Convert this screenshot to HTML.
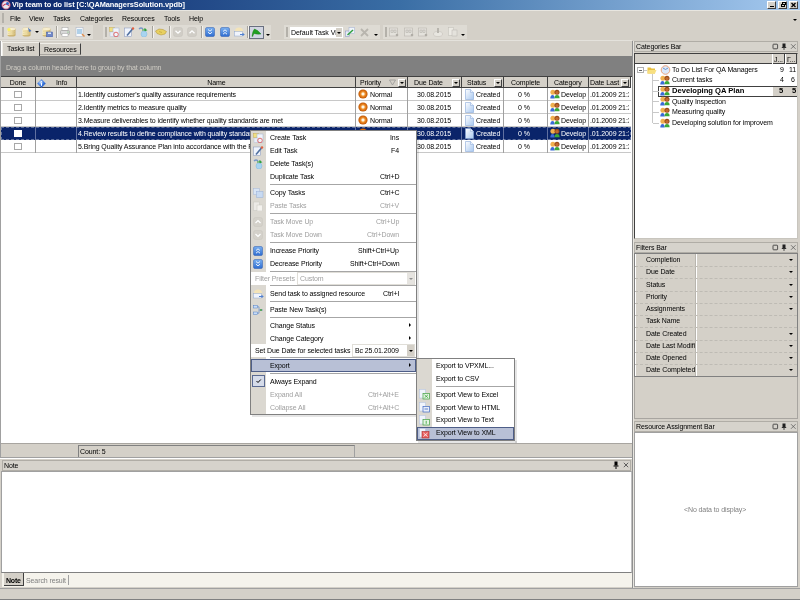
<!DOCTYPE html>
<html><head><meta charset="utf-8">
<style>
*{box-sizing:border-box}
html,body{margin:0;padding:0}
body{width:800px;height:600px;overflow:hidden;position:relative;background:#D4D0C8;font-family:"Liberation Sans",sans-serif;font-size:7px;color:#000;letter-spacing:-0.1px}
.a{position:absolute}
.t{position:absolute;white-space:nowrap;line-height:1;will-change:transform}
</style></head><body>
<div class="a" style="left:0px;top:0px;width:800px;height:10px;background:linear-gradient(to right,#0A246A 0%,#3A6EA5 50%,#A6CAF0 100%)"></div>
<svg class="a" style="left:1px;top:0px" width="10" height="10" viewBox="0 0 10 10"><circle cx="5" cy="5" r="4.2" fill="#E8E8F0" stroke="#B03050" stroke-width="0.8"/><path d="M2 6 Q5 2 8 6" stroke="#D04060" stroke-width="1.2" fill="none"/><circle cx="6.5" cy="3.5" r="1.5" fill="#3060C0"/></svg>
<div class="t" style="left:12px;top:1px;font-weight:bold;color:#fff;font-size:7.4px;letter-spacing:-0.05px">Vip team to do list [C:\QAManagersSolution.vpdb]</div>
<div class="a" style="left:767px;top:1px;width:9px;height:8px;background:#D4D0C8;border:1px solid;border-color:#fff #404040 #404040 #fff"></div>
<div class="a" style="left:778px;top:1px;width:9px;height:8px;background:#D4D0C8;border:1px solid;border-color:#fff #404040 #404040 #fff"></div>
<div class="a" style="left:789px;top:1px;width:9px;height:8px;background:#D4D0C8;border:1px solid;border-color:#fff #404040 #404040 #fff"></div>
<div class="a" style="left:770px;top:6px;width:4px;height:1px;background:#000"></div>
<div class="a" style="left:781px;top:4px;width:4px;height:3px;border:1px solid #000;border-top-width:1.5px"></div>
<div class="a" style="left:782px;top:2px;width:4px;height:3px;border:1px solid #000;border-top-width:1.5px"></div>
<svg class="a" style="left:790px;top:2px" width="7" height="6" viewBox="0 0 7 6"><path d="M1.5 1 L5.5 5 M5.5 1 L1.5 5" stroke="#000" stroke-width="1.3"/></svg>
<div class="a" style="left:0px;top:10px;width:800px;height:1px;background:#E8E6E0"></div>
<div class="a" style="left:2px;top:13px;width:2px;height:10px;background:#B4B1AA"></div>
<div class="t" style="left:10px;top:15px;">File</div>
<div class="t" style="left:29px;top:15px;">View</div>
<div class="t" style="left:53px;top:15px;">Tasks</div>
<div class="t" style="left:80px;top:15px;">Categories</div>
<div class="t" style="left:122px;top:15px;">Resources</div>
<div class="t" style="left:164px;top:15px;">Tools</div>
<div class="t" style="left:189px;top:15px;">Help</div>
<div class="a" style="left:793px;top:19px;width:0;height:0;border-left:2px solid transparent;border-right:2px solid transparent;border-top:2px solid #000"></div>
<div class="a" style="left:0px;top:25px;width:93px;height:14px;background:#DEDBD4"></div>
<div class="a" style="left:103px;top:25px;width:168px;height:14px;background:#DEDBD4"></div>
<div class="a" style="left:284px;top:25px;width:96px;height:14px;background:#DEDBD4"></div>
<div class="a" style="left:383px;top:25px;width:84px;height:14px;background:#DEDBD4"></div>
<div class="a" style="left:2px;top:27px;width:2px;height:10px;background:#B4B1AA"></div>
<div class="a" style="left:105px;top:27px;width:2px;height:10px;background:#B4B1AA"></div>
<div class="a" style="left:286px;top:27px;width:2px;height:10px;background:#B4B1AA"></div>
<div class="a" style="left:385px;top:27px;width:2px;height:10px;background:#B4B1AA"></div>
<svg class="a" style="left:7px;top:27px" width="10" height="10" viewBox="0 0 10 10"><defs><linearGradient id="g1" x1="0" x2="1"><stop offset="0" stop-color="#F8EDC0"/><stop offset="0.5" stop-color="#EFDDA0"/><stop offset="1" stop-color="#C8AE68"/></linearGradient></defs><ellipse cx="4.5" cy="8.2" rx="4" ry="1.3" fill="#C8AE68"/><rect x="0.5" y="2" width="8" height="6.2" fill="url(#g1)"/><ellipse cx="4.5" cy="2" rx="4" ry="1.3" fill="#FBF4D8" stroke="#D8C080" stroke-width="0.4"/><path d="M1 4.5 Q4.5 5.8 8 4.5 M1 6.5 Q4.5 7.8 8 6.5" stroke="#D8C890" stroke-width="0.5" fill="none"/><circle cx="2" cy="2.5" r="1.6" fill="#F8F060"/></svg>
<svg class="a" style="left:22px;top:27px" width="10" height="10" viewBox="0 0 10 10"><defs><linearGradient id="g2" x1="0" x2="1"><stop offset="0" stop-color="#F8EDC0"/><stop offset="0.5" stop-color="#EFDDA0"/><stop offset="1" stop-color="#C8AE68"/></linearGradient></defs><ellipse cx="4.5" cy="8.2" rx="4" ry="1.3" fill="#C8AE68"/><rect x="0.5" y="2" width="8" height="6.2" fill="url(#g2)"/><ellipse cx="4.5" cy="2" rx="4" ry="1.3" fill="#FBF4D8" stroke="#D8C080" stroke-width="0.4"/><path d="M1 4.5 Q4.5 5.8 8 4.5 M1 6.5 Q4.5 7.8 8 6.5" stroke="#D8C890" stroke-width="0.5" fill="none"/><path d="M6 0.5 L9.5 4 L7 5 Z" fill="#5078C0"/></svg>
<div class="a" style="left:35px;top:31px;width:0;height:0;border-left:2px solid transparent;border-right:2px solid transparent;border-top:2px solid #000"></div>
<svg class="a" style="left:42px;top:27px" width="11" height="10" viewBox="0 0 11 10"><defs><linearGradient id="g3" x1="0" x2="1"><stop offset="0" stop-color="#F8EDC0"/><stop offset="0.5" stop-color="#EFDDA0"/><stop offset="1" stop-color="#C8AE68"/></linearGradient></defs><ellipse cx="4.5" cy="8.2" rx="4" ry="1.3" fill="#C8AE68"/><rect x="0.5" y="2" width="8" height="6.2" fill="url(#g3)"/><ellipse cx="4.5" cy="2" rx="4" ry="1.3" fill="#FBF4D8" stroke="#D8C080" stroke-width="0.4"/><path d="M1 4.5 Q4.5 5.8 8 4.5 M1 6.5 Q4.5 7.8 8 6.5" stroke="#D8C890" stroke-width="0.5" fill="none"/><rect x="4.5" y="5" width="6" height="5" fill="#7088C8" stroke="#4058A0" stroke-width="0.5"/><rect x="6" y="5.5" width="3" height="1.5" fill="#E0E8F8"/></svg>
<div class="a" style="left:56px;top:26px;width:1px;height:12px;background:#A6A39C"></div>
<div class="a" style="left:57px;top:26px;width:1px;height:12px;background:#F4F2EE"></div>
<svg class="a" style="left:60px;top:27px" width="10" height="10" viewBox="0 0 10 10"><rect x="2" y="0.5" width="6" height="3" fill="#fff" stroke="#A0A0A0" stroke-width="0.5"/><rect x="0.5" y="3.5" width="9" height="4" rx="1" fill="#D8D8D8" stroke="#909090" stroke-width="0.5"/><rect x="2" y="6.5" width="6" height="3" fill="#fff" stroke="#A0A0A0" stroke-width="0.5"/><circle cx="8" cy="5" r="0.5" fill="#40B040"/></svg>
<svg class="a" style="left:75px;top:27px" width="10" height="10" viewBox="0 0 10 10"><rect x="1" y="0.5" width="7" height="9" fill="#F4F8FC" stroke="#A8B0C0" stroke-width="0.5"/><rect x="2" y="2" width="5" height="5" fill="#B0D0E8"/><path d="M7 7 L9.5 9.5" stroke="#E09050" stroke-width="1.5"/></svg>
<div class="a" style="left:87px;top:34px;width:0;height:0;border-left:2px solid transparent;border-right:2px solid transparent;border-top:2px solid #000"></div>
<svg class="a" style="left:109px;top:27px" width="11" height="10" viewBox="0 0 11 10"><rect x="0.5" y="0.5" width="5" height="4" fill="#F0E080" stroke="#C0A040" stroke-width="0.4"/><rect x="4" y="1" width="6" height="8.5" fill="#F0F4FA" stroke="#A0B0D0" stroke-width="0.5"/><rect x="1" y="5" width="4" height="4.5" fill="#E8EEF8" stroke="#B0B8D0" stroke-width="0.4"/><circle cx="7" cy="7.5" r="2.3" fill="none" stroke="#E06060" stroke-width="0.9"/></svg>
<svg class="a" style="left:124px;top:27px" width="11" height="10" viewBox="0 0 11 10"><rect x="0.5" y="1" width="7" height="8.5" fill="#F0F4FC" stroke="#8090B8" stroke-width="0.5"/><path d="M3 8.5 L8.5 2" stroke="#5070A0" stroke-width="1.6"/><circle cx="9" cy="1.5" r="1.2" fill="#E06040"/></svg>
<svg class="a" style="left:138px;top:27px" width="11" height="10" viewBox="0 0 11 10"><path d="M1 2 Q3 0 5 2" stroke="#7898C8" stroke-width="1.3" fill="none"/><path d="M4 3 L8 3 L6.5 1.5 M8 3 L6.5 4.5" stroke="#30A040" stroke-width="1.2" fill="none"/><circle cx="6" cy="7" r="3" fill="#A8D4F0" stroke="#80B8E0" stroke-width="0.5"/></svg>
<div class="a" style="left:152px;top:26px;width:1px;height:12px;background:#A6A39C"></div>
<div class="a" style="left:153px;top:26px;width:1px;height:12px;background:#F4F2EE"></div>
<svg class="a" style="left:155px;top:28px" width="12" height="8" viewBox="0 0 12 8"><path d="M0.5 3 L4 1 L8 1.5 L11.5 3.5 L10 6 L6 7 L2 5.5 Z" fill="#E8D060" stroke="#B09030" stroke-width="0.5"/><path d="M4 3.5 L7 4.5" stroke="#B09030" stroke-width="0.5"/></svg>
<div class="a" style="left:169px;top:26px;width:1px;height:12px;background:#A6A39C"></div>
<div class="a" style="left:170px;top:26px;width:1px;height:12px;background:#F4F2EE"></div>
<svg class="a" style="left:173px;top:27px" width="10" height="10" viewBox="0 0 10 10"><rect x="0.5" y="0.5" width="9" height="9" rx="2" fill="#D0CDC6" stroke="#C4C1BA" stroke-width="0.5"/><path d="M2.5 3.8 L5 6.2 L7.5 3.8" stroke="#fff" stroke-width="1.3" fill="none"/></svg>
<svg class="a" style="left:187px;top:27px" width="10" height="10" viewBox="0 0 10 10"><rect x="0.5" y="0.5" width="9" height="9" rx="2" fill="#D0CDC6" stroke="#C4C1BA" stroke-width="0.5"/><path d="M2.5 6.2 L5 3.8 L7.5 6.2" stroke="#fff" stroke-width="1.3" fill="none"/></svg>
<div class="a" style="left:201px;top:26px;width:1px;height:12px;background:#A6A39C"></div>
<div class="a" style="left:202px;top:26px;width:1px;height:12px;background:#F4F2EE"></div>
<svg class="a" style="left:205px;top:27px" width="10" height="10" viewBox="0 0 10 10"><defs><linearGradient id="bb1" x1="0" y1="0" x2="0" y2="1"><stop offset="0" stop-color="#7AB0F0"/><stop offset="1" stop-color="#2E6CD0"/></linearGradient></defs><rect x="0.5" y="0.5" width="9" height="9" rx="1.5" fill="url(#bb1)" stroke="#2A5AB0" stroke-width="0.5"/><path d="M3 2.5 L5 4.2 L7 2.5 M3 5.2 L5 6.9 L7 5.2" stroke="#fff" stroke-width="0.9" fill="none"/></svg>
<svg class="a" style="left:220px;top:27px" width="10" height="10" viewBox="0 0 10 10"><defs><linearGradient id="bb2" x1="0" y1="0" x2="0" y2="1"><stop offset="0" stop-color="#7AB0F0"/><stop offset="1" stop-color="#2E6CD0"/></linearGradient></defs><rect x="0.5" y="0.5" width="9" height="9" rx="1.5" fill="url(#bb2)" stroke="#2A5AB0" stroke-width="0.5"/><path d="M3 4.5 L5 2.8 L7 4.5 M3 7.2 L5 5.5 L7 7.2" stroke="#fff" stroke-width="0.9" fill="none"/></svg>
<svg class="a" style="left:234px;top:27px" width="11" height="10" viewBox="0 0 11 10"><ellipse cx="5" cy="4" rx="4" ry="3.5" fill="#F4E4B8"/><rect x="0.5" y="4.5" width="8" height="4.5" fill="#F0F4FC" stroke="#90A8D0" stroke-width="0.5"/><path d="M6 7.5 L10 7.5 L8.5 6 M10 7.5 L8.5 9" stroke="#5080D0" stroke-width="1" fill="none"/></svg>
<div class="a" style="left:247px;top:26px;width:1px;height:12px;background:#A6A39C"></div>
<div class="a" style="left:248px;top:26px;width:1px;height:12px;background:#F4F2EE"></div>
<div class="a" style="left:249px;top:26px;width:15px;height:13px;background:#D2D6E2;border:1px solid #6A7080"></div>
<svg class="a" style="left:251px;top:28px" width="11" height="9" viewBox="0 0 11 9"><path d="M1 8.5 Q1.5 3 3.5 1 Q7 2 10 6 Q6 6.5 3 5.5 Q2 7 1.8 8.5" fill="#20A020" stroke="#107010" stroke-width="0.4"/></svg>
<div class="a" style="left:266px;top:34px;width:0;height:0;border-left:2px solid transparent;border-right:2px solid transparent;border-top:2px solid #000"></div>
<div class="a" style="left:290px;top:27px;width:53px;height:11px;background:#fff"></div>
<div class="a" style="left:290px;top:27px;width:46px;height:11px;overflow:hidden"><div class="t" style="left:1px;top:2px;letter-spacing:-0.05px">Default Task View</div></div>
<div class="a" style="left:336px;top:28px;width:6px;height:9px;background:#D4D0C8"></div>
<div class="a" style="left:337px;top:32px;width:0;height:0;border-left:2px solid transparent;border-right:2px solid transparent;border-top:2px solid #000"></div>
<svg class="a" style="left:345px;top:27px" width="11" height="10" viewBox="0 0 11 10"><rect x="0.5" y="4" width="4" height="5.5" fill="#E8ECF8" stroke="#8090C0" stroke-width="0.5"/><rect x="4" y="0.5" width="5.5" height="6" fill="#F0F4FC" stroke="#A0B0D0" stroke-width="0.5"/><path d="M2.5 8 L8 3" stroke="#30A040" stroke-width="1.5"/></svg>
<svg class="a" style="left:360px;top:28px" width="9" height="9" viewBox="0 0 9 9"><path d="M1 1 L8 8 M8 1 L1 8" stroke="#B8B5AE" stroke-width="1.8"/></svg>
<div class="a" style="left:374px;top:34px;width:0;height:0;border-left:2px solid transparent;border-right:2px solid transparent;border-top:2px solid #000"></div>
<svg class="a" style="left:389px;top:27px" width="10" height="10" viewBox="0 0 10 10"><rect x="0.5" y="1" width="8" height="8" fill="#E4E2DC" stroke="#B8B5AE" stroke-width="0.6"/><rect x="2" y="3" width="2" height="2.5" fill="none" stroke="#A8A59E" stroke-width="0.5"/><rect x="5" y="3" width="2" height="2.5" fill="none" stroke="#A8A59E" stroke-width="0.5"/><circle cx="8" cy="8" r="1.3" fill="#B0ADA6"/></svg>
<svg class="a" style="left:404px;top:27px" width="10" height="10" viewBox="0 0 10 10"><rect x="0.5" y="1" width="8" height="8" fill="#E4E2DC" stroke="#B8B5AE" stroke-width="0.6"/><rect x="2" y="3" width="2" height="2.5" fill="none" stroke="#A8A59E" stroke-width="0.5"/><rect x="5" y="3" width="2" height="2.5" fill="none" stroke="#A8A59E" stroke-width="0.5"/><circle cx="8" cy="8" r="1.3" fill="#B0ADA6"/></svg>
<svg class="a" style="left:418px;top:27px" width="10" height="10" viewBox="0 0 10 10"><rect x="0.5" y="1" width="8" height="8" fill="#E4E2DC" stroke="#B8B5AE" stroke-width="0.6"/><rect x="2" y="3" width="2" height="2.5" fill="none" stroke="#A8A59E" stroke-width="0.5"/><rect x="5" y="3" width="2" height="2.5" fill="none" stroke="#A8A59E" stroke-width="0.5"/><circle cx="8" cy="8" r="1.3" fill="#B0ADA6"/></svg>
<svg class="a" style="left:433px;top:27px" width="10" height="10" viewBox="0 0 10 10"><ellipse cx="5" cy="7" rx="4.5" ry="2.5" fill="#E8E6E0" stroke="#C0BDB6" stroke-width="0.5"/><rect x="4" y="1" width="2" height="5" fill="#B8B5AE"/></svg>
<svg class="a" style="left:448px;top:27px" width="10" height="10" viewBox="0 0 10 10"><rect x="0.5" y="0.5" width="5" height="8" fill="#ECEAE4" stroke="#C0BDB6" stroke-width="0.5"/><rect x="4" y="3" width="5" height="6" fill="#E4E2DC" stroke="#B8B5AE" stroke-width="0.5"/></svg>
<div class="a" style="left:461px;top:34px;width:0;height:0;border-left:2px solid transparent;border-right:2px solid transparent;border-top:2px solid #000"></div>
<div class="a" style="left:0px;top:40px;width:632px;height:1px;background:#E4E2DC"></div>
<div class="a" style="left:1px;top:41px;width:1px;height:15px;background:#fff"></div>
<div class="a" style="left:2px;top:42px;width:38px;height:14px;background:#D4D0C8;border-top:1px solid #F0EEE8;border-left:1px solid #F0EEE8;border-right:1px solid #404040"></div>
<div class="t" style="left:7px;top:45px;">Tasks list</div>
<div class="a" style="left:40px;top:43px;width:41px;height:12px;border-top:1px solid #F0EEE8;border-right:1px solid #404040;border-bottom:1px solid #A8A5A0"></div>
<div class="t" style="left:44px;top:46px;">Resources</div>
<div class="a" style="left:1px;top:56px;width:631px;height:21px;background:#808080"></div>
<div class="t" style="left:6px;top:64px;color:#CFCCC4">Drag a column header here to group by that column</div>
<div class="a" style="left:1px;top:77px;width:631px;height:366px;background:#fff"></div>
<div class="a" style="left:1px;top:76px;width:631px;height:1px;background:#404040"></div>
<div class="a" style="left:1px;top:77px;width:630px;height:11px;background:#D4D0C8;border-bottom:1px solid #404040"></div>
<div class="a" style="left:1px;top:77px;width:35px;height:10px;border-right:1px solid #404040"></div>
<div class="a" style="left:36px;top:77px;width:41px;height:10px;border-right:1px solid #404040"></div>
<div class="a" style="left:77px;top:77px;width:279px;height:10px;border-right:1px solid #404040"></div>
<div class="a" style="left:356px;top:77px;width:52px;height:10px;border-right:1px solid #404040"></div>
<div class="a" style="left:408px;top:77px;width:54px;height:10px;border-right:1px solid #404040"></div>
<div class="a" style="left:462px;top:77px;width:42px;height:10px;border-right:1px solid #404040"></div>
<div class="a" style="left:504px;top:77px;width:44px;height:10px;border-right:1px solid #404040"></div>
<div class="a" style="left:548px;top:77px;width:41px;height:10px;border-right:1px solid #404040"></div>
<div class="a" style="left:589px;top:77px;width:42px;height:10px;border-right:1px solid #404040"></div>
<div class="t" style="left:1px;top:79px;width:34px;text-align:center">Done</div>
<div class="t" style="left:56px;top:79px;">Info</div>
<div class="t" style="left:77px;top:79px;width:279px;text-align:center">Name</div>
<div class="t" style="left:360px;top:79px;">Priority</div>
<div class="t" style="left:414px;top:79px;">Due Date</div>
<div class="t" style="left:467px;top:79px;">Status</div>
<div class="t" style="left:511px;top:79px;">Complete</div>
<div class="t" style="left:554px;top:79px;">Category</div>
<div class="t" style="left:590px;top:79px;">Date Last</div>
<div class="a" style="left:398px;top:79px;width:8px;height:8px;background:#D4D0C8;border:1px solid #404040;border-top-color:#fff;border-left-color:#fff"></div>
<div class="a" style="left:400px;top:82px;width:0;height:0;border-left:2px solid transparent;border-right:2px solid transparent;border-top:2px solid #000"></div>
<div class="a" style="left:452px;top:79px;width:8px;height:8px;background:#D4D0C8;border:1px solid #404040;border-top-color:#fff;border-left-color:#fff"></div>
<div class="a" style="left:454px;top:82px;width:0;height:0;border-left:2px solid transparent;border-right:2px solid transparent;border-top:2px solid #000"></div>
<div class="a" style="left:494px;top:79px;width:8px;height:8px;background:#D4D0C8;border:1px solid #404040;border-top-color:#fff;border-left-color:#fff"></div>
<div class="a" style="left:496px;top:82px;width:0;height:0;border-left:2px solid transparent;border-right:2px solid transparent;border-top:2px solid #000"></div>
<div class="a" style="left:621px;top:79px;width:8px;height:8px;background:#D4D0C8;border:1px solid #404040;border-top-color:#fff;border-left-color:#fff"></div>
<div class="a" style="left:623px;top:82px;width:0;height:0;border-left:2px solid transparent;border-right:2px solid transparent;border-top:2px solid #000"></div>
<svg class="a" style="left:389px;top:79px" width="7" height="7" viewBox="0 0 7 7"><path d="M0.5 1 L6.5 1 L3.5 6 Z" fill="none" stroke="#909090" stroke-width="0.7"/></svg>
<svg class="a" style="left:37px;top:79px" width="9" height="9" viewBox="0 0 9 9"><defs><radialGradient id="ig" cx="0.4" cy="0.35" r="0.7"><stop offset="0" stop-color="#C8E0FF"/><stop offset="0.5" stop-color="#3A78E0"/><stop offset="1" stop-color="#1A48A8"/></radialGradient></defs><path d="M4.5 0.3 L8.7 4.5 L4.5 8.7 L0.3 4.5 Z" fill="url(#ig)" stroke="#6A98D8" stroke-width="0.4"/><rect x="4" y="2.2" width="1" height="1" fill="#fff"/><rect x="4" y="3.8" width="1" height="3" fill="#fff"/></svg>
<div class="a" style="left:1px;top:88px;width:630px;height:13px;background:#fff"></div>
<div class="a" style="left:1px;top:100px;width:630px;height:1px;background:#C8C8C8"></div>
<div class="a" style="left:35px;top:88px;width:1px;height:13px;background:#A0A0A0"></div>
<div class="a" style="left:76px;top:88px;width:1px;height:13px;background:#A0A0A0"></div>
<div class="a" style="left:355px;top:88px;width:1px;height:13px;background:#A0A0A0"></div>
<div class="a" style="left:407px;top:88px;width:1px;height:13px;background:#A0A0A0"></div>
<div class="a" style="left:461px;top:88px;width:1px;height:13px;background:#A0A0A0"></div>
<div class="a" style="left:503px;top:88px;width:1px;height:13px;background:#A0A0A0"></div>
<div class="a" style="left:547px;top:88px;width:1px;height:13px;background:#A0A0A0"></div>
<div class="a" style="left:588px;top:88px;width:1px;height:13px;background:#A0A0A0"></div>
<div class="a" style="left:14px;top:91px;width:8px;height:7px;background:#fff;border:1px solid #A8A8A8"></div>
<div class="t" style="left:78px;top:91px;color:#000">1.Identify customer&#39;s quality assurance requirements</div>
<svg class="a" style="left:358px;top:89px" width="10" height="10" viewBox="0 0 10 10"><defs><radialGradient id="pg0" cx="0.5" cy="0.5" r="0.5"><stop offset="0" stop-color="#FFFFFF"/><stop offset="0.25" stop-color="#FFF0D8"/><stop offset="0.42" stop-color="#F0A040"/><stop offset="0.7" stop-color="#E07010"/><stop offset="1" stop-color="#B85808"/></radialGradient></defs><circle cx="5" cy="5" r="4.6" fill="url(#pg0)"/></svg>
<div class="t" style="left:370px;top:91px;color:#000">Normal</div>
<div class="t" style="left:417px;top:91px;color:#000">30.08.2015</div>
<svg class="a" style="left:465px;top:89px" width="9" height="11" viewBox="0 0 9 11"><defs><linearGradient id="dg0" x1="0" y1="0" x2="1" y2="1"><stop offset="0" stop-color="#FFFFFF"/><stop offset="1" stop-color="#A8C8F0"/></linearGradient></defs><path d="M0.5 0.5 L5.5 0.5 L8.5 3.5 L8.5 10.5 L0.5 10.5 Z" fill="url(#dg0)" stroke="#88A8D8" stroke-width="0.6"/><path d="M5.5 0.5 L5.5 3.5 L8.5 3.5" fill="#E8F0FC" stroke="#88A8D8" stroke-width="0.5"/></svg>
<div class="t" style="left:476px;top:91px;color:#000">Created</div>
<div class="t" style="left:518px;top:91px;color:#000">0 %</div>
<svg class="a" style="left:550px;top:89px" width="10" height="10" viewBox="0 0 10 10"><circle cx="2.9" cy="3.3" r="2.5" fill="#F0B050"/><path d="M0.3 9.6 Q0.3 6 2.6 6 Q4.6 6 4.6 9.6 Z" fill="#3A6AD8"/><circle cx="7" cy="3.3" r="2.5" fill="#9A4A18"/><circle cx="7" cy="3.6" r="1.6" fill="#C06A30"/><path d="M4.5 9.3 Q4.5 6 7 6 Q9.6 6 9.6 9.3 Z" fill="#3AA838"/></svg>
<div class="t" style="left:561px;top:91px;color:#000">Develop</div>
<div class="a" style="left:589px;top:88px;width:40px;height:13px;overflow:hidden"><div class="t" style="left:1px;top:3px;color:#000">.01.2009 21:30</div></div>
<div class="a" style="left:1px;top:101px;width:630px;height:13px;background:#fff"></div>
<div class="a" style="left:1px;top:113px;width:630px;height:1px;background:#C8C8C8"></div>
<div class="a" style="left:35px;top:101px;width:1px;height:13px;background:#A0A0A0"></div>
<div class="a" style="left:76px;top:101px;width:1px;height:13px;background:#A0A0A0"></div>
<div class="a" style="left:355px;top:101px;width:1px;height:13px;background:#A0A0A0"></div>
<div class="a" style="left:407px;top:101px;width:1px;height:13px;background:#A0A0A0"></div>
<div class="a" style="left:461px;top:101px;width:1px;height:13px;background:#A0A0A0"></div>
<div class="a" style="left:503px;top:101px;width:1px;height:13px;background:#A0A0A0"></div>
<div class="a" style="left:547px;top:101px;width:1px;height:13px;background:#A0A0A0"></div>
<div class="a" style="left:588px;top:101px;width:1px;height:13px;background:#A0A0A0"></div>
<div class="a" style="left:14px;top:104px;width:8px;height:7px;background:#fff;border:1px solid #A8A8A8"></div>
<div class="t" style="left:78px;top:104px;color:#000">2.Identify metrics to measure quality</div>
<svg class="a" style="left:358px;top:102px" width="10" height="10" viewBox="0 0 10 10"><defs><radialGradient id="pg1" cx="0.5" cy="0.5" r="0.5"><stop offset="0" stop-color="#FFFFFF"/><stop offset="0.25" stop-color="#FFF0D8"/><stop offset="0.42" stop-color="#F0A040"/><stop offset="0.7" stop-color="#E07010"/><stop offset="1" stop-color="#B85808"/></radialGradient></defs><circle cx="5" cy="5" r="4.6" fill="url(#pg1)"/></svg>
<div class="t" style="left:370px;top:104px;color:#000">Normal</div>
<div class="t" style="left:417px;top:104px;color:#000">30.08.2015</div>
<svg class="a" style="left:465px;top:102px" width="9" height="11" viewBox="0 0 9 11"><defs><linearGradient id="dg1" x1="0" y1="0" x2="1" y2="1"><stop offset="0" stop-color="#FFFFFF"/><stop offset="1" stop-color="#A8C8F0"/></linearGradient></defs><path d="M0.5 0.5 L5.5 0.5 L8.5 3.5 L8.5 10.5 L0.5 10.5 Z" fill="url(#dg1)" stroke="#88A8D8" stroke-width="0.6"/><path d="M5.5 0.5 L5.5 3.5 L8.5 3.5" fill="#E8F0FC" stroke="#88A8D8" stroke-width="0.5"/></svg>
<div class="t" style="left:476px;top:104px;color:#000">Created</div>
<div class="t" style="left:518px;top:104px;color:#000">0 %</div>
<svg class="a" style="left:550px;top:102px" width="10" height="10" viewBox="0 0 10 10"><circle cx="2.9" cy="3.3" r="2.5" fill="#F0B050"/><path d="M0.3 9.6 Q0.3 6 2.6 6 Q4.6 6 4.6 9.6 Z" fill="#3A6AD8"/><circle cx="7" cy="3.3" r="2.5" fill="#9A4A18"/><circle cx="7" cy="3.6" r="1.6" fill="#C06A30"/><path d="M4.5 9.3 Q4.5 6 7 6 Q9.6 6 9.6 9.3 Z" fill="#3AA838"/></svg>
<div class="t" style="left:561px;top:104px;color:#000">Develop</div>
<div class="a" style="left:589px;top:101px;width:40px;height:13px;overflow:hidden"><div class="t" style="left:1px;top:3px;color:#000">.01.2009 21:30</div></div>
<div class="a" style="left:1px;top:114px;width:630px;height:13px;background:#fff"></div>
<div class="a" style="left:1px;top:126px;width:630px;height:1px;background:#C8C8C8"></div>
<div class="a" style="left:35px;top:114px;width:1px;height:13px;background:#A0A0A0"></div>
<div class="a" style="left:76px;top:114px;width:1px;height:13px;background:#A0A0A0"></div>
<div class="a" style="left:355px;top:114px;width:1px;height:13px;background:#A0A0A0"></div>
<div class="a" style="left:407px;top:114px;width:1px;height:13px;background:#A0A0A0"></div>
<div class="a" style="left:461px;top:114px;width:1px;height:13px;background:#A0A0A0"></div>
<div class="a" style="left:503px;top:114px;width:1px;height:13px;background:#A0A0A0"></div>
<div class="a" style="left:547px;top:114px;width:1px;height:13px;background:#A0A0A0"></div>
<div class="a" style="left:588px;top:114px;width:1px;height:13px;background:#A0A0A0"></div>
<div class="a" style="left:14px;top:117px;width:8px;height:7px;background:#fff;border:1px solid #A8A8A8"></div>
<div class="t" style="left:78px;top:117px;color:#000">3.Measure deliverables to identify whether quality standards are met</div>
<svg class="a" style="left:358px;top:115px" width="10" height="10" viewBox="0 0 10 10"><defs><radialGradient id="pg2" cx="0.5" cy="0.5" r="0.5"><stop offset="0" stop-color="#FFFFFF"/><stop offset="0.25" stop-color="#FFF0D8"/><stop offset="0.42" stop-color="#F0A040"/><stop offset="0.7" stop-color="#E07010"/><stop offset="1" stop-color="#B85808"/></radialGradient></defs><circle cx="5" cy="5" r="4.6" fill="url(#pg2)"/></svg>
<div class="t" style="left:370px;top:117px;color:#000">Normal</div>
<div class="t" style="left:417px;top:117px;color:#000">30.08.2015</div>
<svg class="a" style="left:465px;top:115px" width="9" height="11" viewBox="0 0 9 11"><defs><linearGradient id="dg2" x1="0" y1="0" x2="1" y2="1"><stop offset="0" stop-color="#FFFFFF"/><stop offset="1" stop-color="#A8C8F0"/></linearGradient></defs><path d="M0.5 0.5 L5.5 0.5 L8.5 3.5 L8.5 10.5 L0.5 10.5 Z" fill="url(#dg2)" stroke="#88A8D8" stroke-width="0.6"/><path d="M5.5 0.5 L5.5 3.5 L8.5 3.5" fill="#E8F0FC" stroke="#88A8D8" stroke-width="0.5"/></svg>
<div class="t" style="left:476px;top:117px;color:#000">Created</div>
<div class="t" style="left:518px;top:117px;color:#000">0 %</div>
<svg class="a" style="left:550px;top:115px" width="10" height="10" viewBox="0 0 10 10"><circle cx="2.9" cy="3.3" r="2.5" fill="#F0B050"/><path d="M0.3 9.6 Q0.3 6 2.6 6 Q4.6 6 4.6 9.6 Z" fill="#3A6AD8"/><circle cx="7" cy="3.3" r="2.5" fill="#9A4A18"/><circle cx="7" cy="3.6" r="1.6" fill="#C06A30"/><path d="M4.5 9.3 Q4.5 6 7 6 Q9.6 6 9.6 9.3 Z" fill="#3AA838"/></svg>
<div class="t" style="left:561px;top:117px;color:#000">Develop</div>
<div class="a" style="left:589px;top:114px;width:40px;height:13px;overflow:hidden"><div class="t" style="left:1px;top:3px;color:#000">.01.2009 21:30</div></div>
<div class="a" style="left:1px;top:127px;width:630px;height:13px;background:#0A246A"></div>
<div class="a" style="left:1px;top:139px;width:630px;height:1px;background:#0A246A"></div>
<div class="a" style="left:35px;top:127px;width:1px;height:13px;background:#6070A0"></div>
<div class="a" style="left:76px;top:127px;width:1px;height:13px;background:#6070A0"></div>
<div class="a" style="left:355px;top:127px;width:1px;height:13px;background:#6070A0"></div>
<div class="a" style="left:407px;top:127px;width:1px;height:13px;background:#6070A0"></div>
<div class="a" style="left:461px;top:127px;width:1px;height:13px;background:#6070A0"></div>
<div class="a" style="left:503px;top:127px;width:1px;height:13px;background:#6070A0"></div>
<div class="a" style="left:547px;top:127px;width:1px;height:13px;background:#6070A0"></div>
<div class="a" style="left:588px;top:127px;width:1px;height:13px;background:#6070A0"></div>
<div class="a" style="left:14px;top:130px;width:8px;height:7px;background:#fff;border:1px solid #fff"></div>
<div class="t" style="left:78px;top:130px;color:#fff">4.Review results to define compliance with quality standards</div>
<svg class="a" style="left:358px;top:128px" width="10" height="10" viewBox="0 0 10 10"><defs><radialGradient id="pg3" cx="0.5" cy="0.5" r="0.5"><stop offset="0" stop-color="#FFFFFF"/><stop offset="0.25" stop-color="#FFF0D8"/><stop offset="0.42" stop-color="#F0A040"/><stop offset="0.7" stop-color="#E07010"/><stop offset="1" stop-color="#B85808"/></radialGradient></defs><circle cx="5" cy="5" r="4.6" fill="url(#pg3)"/></svg>
<div class="t" style="left:370px;top:130px;color:#fff">Normal</div>
<div class="t" style="left:417px;top:130px;color:#fff">30.08.2015</div>
<svg class="a" style="left:465px;top:128px" width="9" height="11" viewBox="0 0 9 11"><defs><linearGradient id="dg3" x1="0" y1="0" x2="1" y2="1"><stop offset="0" stop-color="#FFFFFF"/><stop offset="1" stop-color="#A8C8F0"/></linearGradient></defs><path d="M0.5 0.5 L5.5 0.5 L8.5 3.5 L8.5 10.5 L0.5 10.5 Z" fill="url(#dg3)" stroke="#88A8D8" stroke-width="0.6"/><path d="M5.5 0.5 L5.5 3.5 L8.5 3.5" fill="#E8F0FC" stroke="#88A8D8" stroke-width="0.5"/></svg>
<div class="t" style="left:476px;top:130px;color:#fff">Created</div>
<div class="t" style="left:518px;top:130px;color:#fff">0 %</div>
<svg class="a" style="left:550px;top:128px" width="10" height="10" viewBox="0 0 10 10"><circle cx="2.9" cy="3.3" r="2.5" fill="#F0B050"/><path d="M0.3 9.6 Q0.3 6 2.6 6 Q4.6 6 4.6 9.6 Z" fill="#3A6AD8"/><circle cx="7" cy="3.3" r="2.5" fill="#9A4A18"/><circle cx="7" cy="3.6" r="1.6" fill="#C06A30"/><path d="M4.5 9.3 Q4.5 6 7 6 Q9.6 6 9.6 9.3 Z" fill="#3AA838"/></svg>
<div class="t" style="left:561px;top:130px;color:#fff">Develop</div>
<div class="a" style="left:589px;top:127px;width:40px;height:13px;overflow:hidden"><div class="t" style="left:1px;top:3px;color:#fff">.01.2009 21:30</div></div>
<div class="a" style="left:1px;top:140px;width:630px;height:13px;background:#fff"></div>
<div class="a" style="left:1px;top:152px;width:630px;height:1px;background:#C8C8C8"></div>
<div class="a" style="left:35px;top:140px;width:1px;height:13px;background:#A0A0A0"></div>
<div class="a" style="left:76px;top:140px;width:1px;height:13px;background:#A0A0A0"></div>
<div class="a" style="left:355px;top:140px;width:1px;height:13px;background:#A0A0A0"></div>
<div class="a" style="left:407px;top:140px;width:1px;height:13px;background:#A0A0A0"></div>
<div class="a" style="left:461px;top:140px;width:1px;height:13px;background:#A0A0A0"></div>
<div class="a" style="left:503px;top:140px;width:1px;height:13px;background:#A0A0A0"></div>
<div class="a" style="left:547px;top:140px;width:1px;height:13px;background:#A0A0A0"></div>
<div class="a" style="left:588px;top:140px;width:1px;height:13px;background:#A0A0A0"></div>
<div class="a" style="left:14px;top:143px;width:8px;height:7px;background:#fff;border:1px solid #A8A8A8"></div>
<div class="t" style="left:78px;top:143px;color:#000">5.Bring Quality Assurance Plan into accordance with the Project Plan</div>
<svg class="a" style="left:358px;top:141px" width="10" height="10" viewBox="0 0 10 10"><defs><radialGradient id="pg4" cx="0.5" cy="0.5" r="0.5"><stop offset="0" stop-color="#FFFFFF"/><stop offset="0.25" stop-color="#FFF0D8"/><stop offset="0.42" stop-color="#F0A040"/><stop offset="0.7" stop-color="#E07010"/><stop offset="1" stop-color="#B85808"/></radialGradient></defs><circle cx="5" cy="5" r="4.6" fill="url(#pg4)"/></svg>
<div class="t" style="left:370px;top:143px;color:#000">Normal</div>
<div class="t" style="left:417px;top:143px;color:#000">30.08.2015</div>
<svg class="a" style="left:465px;top:141px" width="9" height="11" viewBox="0 0 9 11"><defs><linearGradient id="dg4" x1="0" y1="0" x2="1" y2="1"><stop offset="0" stop-color="#FFFFFF"/><stop offset="1" stop-color="#A8C8F0"/></linearGradient></defs><path d="M0.5 0.5 L5.5 0.5 L8.5 3.5 L8.5 10.5 L0.5 10.5 Z" fill="url(#dg4)" stroke="#88A8D8" stroke-width="0.6"/><path d="M5.5 0.5 L5.5 3.5 L8.5 3.5" fill="#E8F0FC" stroke="#88A8D8" stroke-width="0.5"/></svg>
<div class="t" style="left:476px;top:143px;color:#000">Created</div>
<div class="t" style="left:518px;top:143px;color:#000">0 %</div>
<svg class="a" style="left:550px;top:141px" width="10" height="10" viewBox="0 0 10 10"><circle cx="2.9" cy="3.3" r="2.5" fill="#F0B050"/><path d="M0.3 9.6 Q0.3 6 2.6 6 Q4.6 6 4.6 9.6 Z" fill="#3A6AD8"/><circle cx="7" cy="3.3" r="2.5" fill="#9A4A18"/><circle cx="7" cy="3.6" r="1.6" fill="#C06A30"/><path d="M4.5 9.3 Q4.5 6 7 6 Q9.6 6 9.6 9.3 Z" fill="#3AA838"/></svg>
<div class="t" style="left:561px;top:143px;color:#000">Develop</div>
<div class="a" style="left:589px;top:140px;width:40px;height:13px;overflow:hidden"><div class="t" style="left:1px;top:3px;color:#000">.01.2009 21:30</div></div>
<div class="a" style="left:1px;top:127px;width:630px;height:13px;border:1px dashed rgba(255,255,255,0.35)"></div>
<div class="a" style="left:0px;top:41px;width:1px;height:417px;background:#A0A0A0"></div>
<div class="a" style="left:1px;top:443px;width:631px;height:14px;background:#D4D0C8;border-top:1px solid #A8A5A0"></div>
<div class="a" style="left:78px;top:445px;width:277px;height:12px;border-left:1px solid #808080;border-top:1px solid #808080;border-right:1px solid #A0A0A0"></div>
<div class="t" style="left:80px;top:448px;">Count: 5</div>
<div class="a" style="left:0px;top:457px;width:632px;height:1px;background:#A0A0A0"></div>
<div class="a" style="left:0px;top:458px;width:632px;height:1px;background:#fff"></div>
<div class="a" style="left:2px;top:460px;width:629px;height:11px;background:#D6D3CC;border:1px solid #B0ADA6"></div>
<div class="t" style="left:4px;top:462px;">Note</div>
<svg class="a" style="left:613px;top:461px" width="6" height="9" viewBox="0 0 6 9"><rect x="1.5" y="0.5" width="3" height="4" fill="#000"/><rect x="0.5" y="4.5" width="5" height="1" fill="#000"/><rect x="2.5" y="5.5" width="1" height="2.5" fill="#000"/></svg>
<svg class="a" style="left:623px;top:462px" width="6" height="7" viewBox="0 0 6 7"><path d="M0.8 0.8 L5.2 5.2 M5.2 0.8 L0.8 5.2" stroke="#404040" stroke-width="0.8"/></svg>
<div class="a" style="left:2px;top:471px;width:629px;height:101px;background:#fff"></div>
<div class="a" style="left:1px;top:471px;width:631px;height:102px;border:1px solid;border-color:#A0A0A0 #C0C0C0 #808080 #A0A0A0"></div>
<div class="a" style="left:2px;top:573px;width:630px;height:14px;background:#F5F3EC"></div>
<div class="a" style="left:4px;top:573px;width:20px;height:13px;background:#D4D0C8;border-right:1px solid #404040;border-bottom:1px solid #404040"></div>
<div class="t" style="left:6px;top:577px;font-weight:bold;letter-spacing:-0.2px">Note</div>
<div class="t" style="left:26px;top:577px;color:#808080">Search result</div>
<div class="a" style="left:68px;top:575px;width:1px;height:10px;background:#A0A0A0"></div>
<div class="a" style="left:0px;top:588px;width:800px;height:12px;background:#D4D0C8;border-top:1px solid #A0A0A0;border-bottom:1px solid #808080"></div>
<div class="a" style="left:632px;top:41px;width:1px;height:547px;background:#909090"></div>
<div class="a" style="left:633px;top:41px;width:1px;height:547px;background:#E8E6E0"></div>
<div class="a" style="left:634px;top:41px;width:164px;height:11px;background:#D6D3CC;border:1px solid #B0ADA6"></div>
<div class="t" style="left:636px;top:43px;">Categories Bar</div>
<svg class="a" style="left:772px;top:43px" width="7" height="7" viewBox="0 0 7 7"><rect x="1" y="1.2" width="4.6" height="4.6" rx="0.6" fill="none" stroke="#303030" stroke-width="0.8"/></svg>
<svg class="a" style="left:781px;top:43px" width="6" height="8" viewBox="0 0 6 8"><rect x="1.5" y="0.5" width="3" height="3.5" fill="#202020"/><rect x="0.8" y="4" width="4.4" height="0.9" fill="#202020"/><rect x="2.6" y="4.9" width="0.8" height="2" fill="#202020"/></svg>
<svg class="a" style="left:790px;top:43px" width="7" height="7" viewBox="0 0 7 7"><path d="M1 1.2 L5.6 5.8 M5.6 1.2 L1 5.8" stroke="#505050" stroke-width="0.7"/></svg>
<div class="a" style="left:634px;top:53px;width:164px;height:186px;background:#fff"></div>
<div class="a" style="left:634px;top:53px;width:164px;height:186px;border:1px solid;border-color:#404040 #C8C5BE #C8C5BE #404040"></div>
<div class="a" style="left:635px;top:54px;width:162px;height:10px;background:#D4D0C8;border-bottom:1px solid #404040"></div>
<div class="a" style="left:772px;top:54px;width:13px;height:10px;border-left:1px solid #fff;border-right:1px solid #404040"></div>
<div class="a" style="left:785px;top:54px;width:12px;height:10px;border-left:1px solid #fff;border-right:1px solid #404040"></div>
<div class="t" style="left:774px;top:56px;">J...</div>
<div class="t" style="left:787px;top:56px;">&#1043;...</div>
<div class="t" style="left:672px;top:65.8px;">To Do List For QA Managers</div>
<div class="t" style="left:780px;top:65.8px;">9</div>
<div class="t" style="left:789px;top:65.8px;">11</div>
<div class="t" style="left:672px;top:76.4px;">Current tasks</div>
<div class="t" style="left:780px;top:76.4px;">4</div>
<div class="t" style="left:791px;top:76.4px;">6</div>
<div class="a" style="left:653px;top:80.1px;width:6px;height:1px;background:#C8C8C8"></div>
<svg class="a" style="left:660px;top:75.1px" width="10" height="10" viewBox="0 0 10 10"><circle cx="2.9" cy="3.3" r="2.5" fill="#F0B050"/><path d="M0.3 9.6 Q0.3 6 2.6 6 Q4.6 6 4.6 9.6 Z" fill="#3A6AD8"/><circle cx="7" cy="3.3" r="2.5" fill="#9A4A18"/><circle cx="7" cy="3.6" r="1.6" fill="#C06A30"/><path d="M4.5 9.3 Q4.5 6 7 6 Q9.6 6 9.6 9.3 Z" fill="#3AA838"/></svg>
<div class="a" style="left:658px;top:85.8px;width:139px;height:11px;border:1px solid #404040"></div>
<div class="a" style="left:773px;top:86.8px;width:24px;height:9px;background:#D4D0C8"></div>
<div class="t" style="left:672px;top:86.9px;font-weight:bold;font-size:7.6px;letter-spacing:0">Developing QA Plan</div>
<div class="t" style="left:779px;top:86.9px;font-weight:bold;font-size:7.6px">5</div>
<div class="t" style="left:792px;top:86.9px;font-weight:bold;font-size:7.6px">5</div>
<div class="a" style="left:653px;top:90.8px;width:6px;height:1px;background:#C8C8C8"></div>
<svg class="a" style="left:660px;top:85.8px" width="10" height="10" viewBox="0 0 10 10"><circle cx="2.9" cy="3.3" r="2.5" fill="#F0B050"/><path d="M0.3 9.6 Q0.3 6 2.6 6 Q4.6 6 4.6 9.6 Z" fill="#3A6AD8"/><circle cx="7" cy="3.3" r="2.5" fill="#9A4A18"/><circle cx="7" cy="3.6" r="1.6" fill="#C06A30"/><path d="M4.5 9.3 Q4.5 6 7 6 Q9.6 6 9.6 9.3 Z" fill="#3AA838"/></svg>
<div class="t" style="left:672px;top:97.7px;">Quality Inspection</div>
<div class="a" style="left:653px;top:101.4px;width:6px;height:1px;background:#C8C8C8"></div>
<svg class="a" style="left:660px;top:96.4px" width="10" height="10" viewBox="0 0 10 10"><circle cx="2.9" cy="3.3" r="2.5" fill="#F0B050"/><path d="M0.3 9.6 Q0.3 6 2.6 6 Q4.6 6 4.6 9.6 Z" fill="#3A6AD8"/><circle cx="7" cy="3.3" r="2.5" fill="#9A4A18"/><circle cx="7" cy="3.6" r="1.6" fill="#C06A30"/><path d="M4.5 9.3 Q4.5 6 7 6 Q9.6 6 9.6 9.3 Z" fill="#3AA838"/></svg>
<div class="t" style="left:672px;top:108.4px;">Measuring quality</div>
<div class="a" style="left:653px;top:112.1px;width:6px;height:1px;background:#C8C8C8"></div>
<svg class="a" style="left:660px;top:107.1px" width="10" height="10" viewBox="0 0 10 10"><circle cx="2.9" cy="3.3" r="2.5" fill="#F0B050"/><path d="M0.3 9.6 Q0.3 6 2.6 6 Q4.6 6 4.6 9.6 Z" fill="#3A6AD8"/><circle cx="7" cy="3.3" r="2.5" fill="#9A4A18"/><circle cx="7" cy="3.6" r="1.6" fill="#C06A30"/><path d="M4.5 9.3 Q4.5 6 7 6 Q9.6 6 9.6 9.3 Z" fill="#3AA838"/></svg>
<div class="t" style="left:672px;top:119.0px;">Developing solution for improvem</div>
<div class="a" style="left:653px;top:122.7px;width:6px;height:1px;background:#C8C8C8"></div>
<svg class="a" style="left:660px;top:117.7px" width="10" height="10" viewBox="0 0 10 10"><circle cx="2.9" cy="3.3" r="2.5" fill="#F0B050"/><path d="M0.3 9.6 Q0.3 6 2.6 6 Q4.6 6 4.6 9.6 Z" fill="#3A6AD8"/><circle cx="7" cy="3.3" r="2.5" fill="#9A4A18"/><circle cx="7" cy="3.6" r="1.6" fill="#C06A30"/><path d="M4.5 9.3 Q4.5 6 7 6 Q9.6 6 9.6 9.3 Z" fill="#3AA838"/></svg>
<div class="a" style="left:652px;top:74px;width:1px;height:49px;background:#C8C8C8"></div>
<div class="a" style="left:637px;top:67px;width:7px;height:6px;border:1px solid #B0B0B0;background:#fff"></div>
<div class="a" style="left:639px;top:69.5px;width:3px;height:1px;background:#606060"></div>
<div class="a" style="left:644px;top:69.5px;width:3px;height:1px;background:#C8C8C8"></div>
<svg class="a" style="left:647px;top:66px" width="10" height="8" viewBox="0 0 10 8"><path d="M0.5 1.5 L3.5 1.5 L4.5 2.5 L8 2.5 L8 7.5 L0.5 7.5 Z" fill="#E8C040"/><path d="M1.5 4 L9.5 4 L8 7.5 L0.5 7.5 Z" fill="#F8E080"/></svg>
<svg class="a" style="left:660px;top:65px" width="11" height="10" viewBox="0 0 11 10"><circle cx="5.5" cy="5" r="4.3" fill="#DCE8F8" stroke="#E89060" stroke-width="0.8"/><path d="M3 3 Q5.5 6 8 3" stroke="#5080C0" stroke-width="0.8" fill="none"/></svg>
<div class="a" style="left:634px;top:242px;width:164px;height:11px;background:#D6D3CC;border:1px solid #B0ADA6"></div>
<div class="t" style="left:636px;top:244px;">Filters Bar</div>
<svg class="a" style="left:772px;top:244px" width="7" height="7" viewBox="0 0 7 7"><rect x="1" y="1.2" width="4.6" height="4.6" rx="0.6" fill="none" stroke="#303030" stroke-width="0.8"/></svg>
<svg class="a" style="left:781px;top:244px" width="6" height="8" viewBox="0 0 6 8"><rect x="1.5" y="0.5" width="3" height="3.5" fill="#202020"/><rect x="0.8" y="4" width="4.4" height="0.9" fill="#202020"/><rect x="2.6" y="4.9" width="0.8" height="2" fill="#202020"/></svg>
<svg class="a" style="left:790px;top:244px" width="7" height="7" viewBox="0 0 7 7"><path d="M1 1.2 L5.6 5.8 M5.6 1.2 L1 5.8" stroke="#505050" stroke-width="0.7"/></svg>
<div class="a" style="left:634px;top:253px;width:164px;height:166px;border:1px solid #A8A5A0"></div>
<div class="a" style="left:634px;top:253px;width:164px;height:124px;border:1px solid #808080"></div>
<div class="a" style="left:635px;top:254px;width:162px;height:122px;border-left:1px solid #fff"></div>
<div class="a" style="left:696px;top:254px;width:1px;height:122px;background:#fff"></div>
<div class="a" style="left:695px;top:254px;width:1px;height:122px;background:#B8B5AE"></div>
<div class="t" style="left:646px;top:256.0px;">Completion</div>
<div class="a" style="left:635px;top:266.0px;width:162px;height:1px;border-top:1px dashed #BEBBB4"></div>
<div class="a" style="left:789px;top:259.0px;width:0;height:0;border-left:2.5px solid transparent;border-right:2.5px solid transparent;border-top:2.5px solid #000"></div>
<div class="t" style="left:646px;top:268.3px;">Due Date</div>
<div class="a" style="left:635px;top:278.3px;width:162px;height:1px;border-top:1px dashed #BEBBB4"></div>
<div class="a" style="left:789px;top:271.3px;width:0;height:0;border-left:2.5px solid transparent;border-right:2.5px solid transparent;border-top:2.5px solid #000"></div>
<div class="t" style="left:646px;top:280.5px;">Status</div>
<div class="a" style="left:635px;top:290.5px;width:162px;height:1px;border-top:1px dashed #BEBBB4"></div>
<div class="a" style="left:789px;top:283.5px;width:0;height:0;border-left:2.5px solid transparent;border-right:2.5px solid transparent;border-top:2.5px solid #000"></div>
<div class="t" style="left:646px;top:292.8px;">Priority</div>
<div class="a" style="left:635px;top:302.8px;width:162px;height:1px;border-top:1px dashed #BEBBB4"></div>
<div class="a" style="left:789px;top:295.8px;width:0;height:0;border-left:2.5px solid transparent;border-right:2.5px solid transparent;border-top:2.5px solid #000"></div>
<div class="t" style="left:646px;top:305.1px;">Assignments</div>
<div class="a" style="left:635px;top:315.1px;width:162px;height:1px;border-top:1px dashed #BEBBB4"></div>
<div class="a" style="left:789px;top:308.1px;width:0;height:0;border-left:2.5px solid transparent;border-right:2.5px solid transparent;border-top:2.5px solid #000"></div>
<div class="t" style="left:646px;top:317.4px;">Task Name</div>
<div class="a" style="left:635px;top:327.4px;width:162px;height:1px;border-top:1px dashed #BEBBB4"></div>
<div class="t" style="left:646px;top:329.6px;">Date Created</div>
<div class="a" style="left:635px;top:339.6px;width:162px;height:1px;border-top:1px dashed #BEBBB4"></div>
<div class="a" style="left:789px;top:332.6px;width:0;height:0;border-left:2.5px solid transparent;border-right:2.5px solid transparent;border-top:2.5px solid #000"></div>
<div class="t" style="left:646px;top:341.9px;">Date Last Modifi</div>
<div class="a" style="left:635px;top:351.9px;width:162px;height:1px;border-top:1px dashed #BEBBB4"></div>
<div class="a" style="left:789px;top:344.9px;width:0;height:0;border-left:2.5px solid transparent;border-right:2.5px solid transparent;border-top:2.5px solid #000"></div>
<div class="t" style="left:646px;top:354.2px;">Date Opened</div>
<div class="a" style="left:635px;top:364.2px;width:162px;height:1px;border-top:1px dashed #BEBBB4"></div>
<div class="a" style="left:789px;top:357.2px;width:0;height:0;border-left:2.5px solid transparent;border-right:2.5px solid transparent;border-top:2.5px solid #000"></div>
<div class="t" style="left:646px;top:366.4px;">Date Completed</div>
<div class="a" style="left:789px;top:369.4px;width:0;height:0;border-left:2.5px solid transparent;border-right:2.5px solid transparent;border-top:2.5px solid #000"></div>
<div class="a" style="left:634px;top:421px;width:164px;height:11px;background:#D6D3CC;border:1px solid #B0ADA6"></div>
<div class="t" style="left:636px;top:423px;">Resource Assignment Bar</div>
<svg class="a" style="left:772px;top:423px" width="7" height="7" viewBox="0 0 7 7"><rect x="1" y="1.2" width="4.6" height="4.6" rx="0.6" fill="none" stroke="#303030" stroke-width="0.8"/></svg>
<svg class="a" style="left:781px;top:423px" width="6" height="8" viewBox="0 0 6 8"><rect x="1.5" y="0.5" width="3" height="3.5" fill="#202020"/><rect x="0.8" y="4" width="4.4" height="0.9" fill="#202020"/><rect x="2.6" y="4.9" width="0.8" height="2" fill="#202020"/></svg>
<svg class="a" style="left:790px;top:423px" width="7" height="7" viewBox="0 0 7 7"><path d="M1 1.2 L5.6 5.8 M5.6 1.2 L1 5.8" stroke="#505050" stroke-width="0.7"/></svg>
<div class="a" style="left:634px;top:432px;width:164px;height:155px;background:#fff"></div>
<div class="a" style="left:634px;top:432px;width:164px;height:155px;border:1px solid #A0A0A0"></div>
<div class="t" style="left:684px;top:506px;color:#808080">&lt;No data to display&gt;</div>
<div class="a" style="left:250px;top:130px;width:167px;height:285px;background:#fff;border:1px solid #808080"></div>
<div class="a" style="left:251px;top:131px;width:15px;height:283px;background:#DBD8D1"></div>
<div class="a" style="left:417px;top:132px;width:2px;height:284px;background:rgba(0,0,0,0.10)"></div>
<div class="a" style="left:252px;top:415px;width:167px;height:2px;background:rgba(0,0,0,0.10)"></div>
<div class="t" style="left:270px;top:134.3px;color:#000">Create Task</div>
<div class="t" style="right:401px;top:134.3px;color:#000">Ins</div>
<svg class="a" style="left:253px;top:133px" width="11" height="10" viewBox="0 0 11 10"><rect x="0.5" y="0.5" width="5" height="4" fill="#F0E080" stroke="#C0A040" stroke-width="0.4"/><rect x="4" y="1" width="6" height="8.5" fill="#F0F4FA" stroke="#A0B0D0" stroke-width="0.5"/><rect x="1" y="5" width="4" height="4.5" fill="#E8EEF8" stroke="#B0B8D0" stroke-width="0.4"/><circle cx="7" cy="7.5" r="2.3" fill="none" stroke="#E06060" stroke-width="0.9"/></svg>
<div class="t" style="left:270px;top:147.3px;color:#000">Edit Task</div>
<div class="t" style="right:401px;top:147.3px;color:#000">F4</div>
<svg class="a" style="left:253px;top:146px" width="11" height="10" viewBox="0 0 11 10"><rect x="0.5" y="1" width="7" height="8.5" fill="#F0F4FC" stroke="#8090B8" stroke-width="0.5"/><path d="M3 8.5 L8.5 2" stroke="#5070A0" stroke-width="1.6"/><circle cx="9" cy="1.5" r="1.2" fill="#E06040"/></svg>
<div class="t" style="left:270px;top:160.3px;color:#000">Delete Task(s)</div>
<svg class="a" style="left:253px;top:159px" width="11" height="10" viewBox="0 0 11 10"><path d="M1 2 Q3 0 5 2" stroke="#7898C8" stroke-width="1.3" fill="none"/><path d="M4 3 L8 3 L6.5 1.5 M8 3 L6.5 4.5" stroke="#30A040" stroke-width="1.2" fill="none"/><circle cx="6" cy="7" r="3" fill="#A8D4F0" stroke="#80B8E0" stroke-width="0.5"/></svg>
<div class="t" style="left:270px;top:173.3px;color:#000">Duplicate Task</div>
<div class="t" style="right:401px;top:173.3px;color:#000">Ctrl+D</div>
<div class="a" style="left:270px;top:184px;width:146px;height:1px;background:#A6A6A6"></div>
<div class="t" style="left:270px;top:189.3px;color:#000">Copy Tasks</div>
<div class="t" style="right:401px;top:189.3px;color:#000">Ctrl+C</div>
<svg class="a" style="left:253px;top:188px" width="11" height="10" viewBox="0 0 11 10"><rect x="0.5" y="0.5" width="6" height="6" fill="#D8E4F4" stroke="#A8B8D8" stroke-width="0.5"/><rect x="3.5" y="3.5" width="6.5" height="6" fill="#C8DAF2" stroke="#98B0D8" stroke-width="0.5"/></svg>
<div class="t" style="left:270px;top:202.3px;color:#A0A0A0">Paste Tasks</div>
<div class="t" style="right:401px;top:202.3px;color:#A0A0A0">Ctrl+V</div>
<svg class="a" style="left:253px;top:201px" width="11" height="10" viewBox="0 0 11 10"><rect x="0.5" y="1" width="6" height="8.5" fill="#ECEAE6" stroke="#C8C6C0" stroke-width="0.5"/><rect x="4" y="4" width="5.5" height="6" fill="#F4F2EE" stroke="#C8C6C0" stroke-width="0.5"/></svg>
<div class="a" style="left:270px;top:213px;width:146px;height:1px;background:#A6A6A6"></div>
<div class="t" style="left:270px;top:218.3px;color:#A0A0A0">Task Move Up</div>
<div class="t" style="right:401px;top:218.3px;color:#A0A0A0">Ctrl+Up</div>
<svg class="a" style="left:253px;top:217px" width="10" height="10" viewBox="0 0 10 10"><rect x="0.5" y="0.5" width="9" height="9" rx="2" fill="#D4D1CA" stroke="#C8C5BE" stroke-width="0.5"/><path d="M2.5 6 L5 3.6 L7.5 6" stroke="#fff" stroke-width="1.2" fill="none"/></svg>
<div class="t" style="left:270px;top:231.3px;color:#A0A0A0">Task Move Down</div>
<div class="t" style="right:401px;top:231.3px;color:#A0A0A0">Ctrl+Down</div>
<svg class="a" style="left:253px;top:230px" width="10" height="10" viewBox="0 0 10 10"><rect x="0.5" y="0.5" width="9" height="9" rx="2" fill="#D4D1CA" stroke="#C8C5BE" stroke-width="0.5"/><path d="M2.5 4 L5 6.4 L7.5 4" stroke="#fff" stroke-width="1.2" fill="none"/></svg>
<div class="a" style="left:270px;top:242px;width:146px;height:1px;background:#A6A6A6"></div>
<div class="t" style="left:270px;top:247.3px;color:#000">Increase Priority</div>
<div class="t" style="right:401px;top:247.3px;color:#000">Shift+Ctrl+Up</div>
<svg class="a" style="left:253px;top:246px" width="10" height="10" viewBox="0 0 10 10"><defs><linearGradient id="bb11" x1="0" y1="0" x2="0" y2="1"><stop offset="0" stop-color="#7AB0F0"/><stop offset="1" stop-color="#2E6CD0"/></linearGradient></defs><rect x="0.5" y="0.5" width="9" height="9" rx="1.5" fill="url(#bb11)" stroke="#2A5AB0" stroke-width="0.5"/><path d="M3 4.5 L5 2.8 L7 4.5 M3 7.2 L5 5.5 L7 7.2" stroke="#fff" stroke-width="0.9" fill="none"/></svg>
<div class="t" style="left:270px;top:260.3px;color:#000">Decrease Priority</div>
<div class="t" style="right:401px;top:260.3px;color:#000">Shift+Ctrl+Down</div>
<svg class="a" style="left:253px;top:259px" width="10" height="10" viewBox="0 0 10 10"><defs><linearGradient id="bb12" x1="0" y1="0" x2="0" y2="1"><stop offset="0" stop-color="#7AB0F0"/><stop offset="1" stop-color="#2E6CD0"/></linearGradient></defs><rect x="0.5" y="0.5" width="9" height="9" rx="1.5" fill="url(#bb12)" stroke="#2A5AB0" stroke-width="0.5"/><path d="M3 2.5 L5 4.2 L7 2.5 M3 5.2 L5 6.9 L7 5.2" stroke="#fff" stroke-width="0.9" fill="none"/></svg>
<div class="a" style="left:270px;top:271px;width:146px;height:1px;background:#A6A6A6"></div>
<div class="a" style="left:251px;top:272px;width:165px;height:13px;background:#fff"></div>
<div class="t" style="left:255px;top:275.3px;color:#A0A0A0">Filter Presets</div>
<div class="a" style="left:297px;top:272px;width:118px;height:13px;background:#fff;border:1px solid #E0DED8"></div>
<div class="t" style="left:300px;top:275.3px;color:#A0A0A0">Custom</div>
<div class="a" style="left:407px;top:273px;width:7px;height:11px;background:#E6E4E0"></div>
<div class="a" style="left:409px;top:278px;width:0;height:0;border-left:2px solid transparent;border-right:2px solid transparent;border-top:2px solid #909090"></div>
<div class="a" style="left:270px;top:285px;width:146px;height:1px;background:#A6A6A6"></div>
<div class="t" style="left:270px;top:290.3px;color:#000">Send task to assigned resource</div>
<div class="t" style="right:401px;top:290.3px;color:#000">Ctrl+I</div>
<svg class="a" style="left:253px;top:289px" width="11" height="10" viewBox="0 0 11 10"><ellipse cx="5" cy="4" rx="4" ry="3.5" fill="#F4E4B8"/><rect x="0.5" y="4.5" width="8" height="4.5" fill="#F0F4FC" stroke="#90A8D0" stroke-width="0.5"/><path d="M6 7.5 L10 7.5 L8.5 6 M10 7.5 L8.5 9" stroke="#5080D0" stroke-width="1" fill="none"/></svg>
<div class="a" style="left:270px;top:301px;width:146px;height:1px;background:#A6A6A6"></div>
<div class="t" style="left:270px;top:306.3px;color:#000">Paste New Task(s)</div>
<svg class="a" style="left:253px;top:305px" width="11" height="10" viewBox="0 0 11 10"><rect x="0.5" y="0.5" width="4" height="2.5" fill="#C8DCF8" stroke="#5080C8" stroke-width="0.5"/><rect x="0.5" y="7" width="4" height="2.5" fill="#C8DCF8" stroke="#5080C8" stroke-width="0.5"/><path d="M4.5 1.8 L6 1.8 L6 8.2 L4.5 8.2 M6 5 L10 5" stroke="#5080C8" stroke-width="0.6" fill="none"/><circle cx="8" cy="5" r="1" fill="#40A040"/></svg>
<div class="a" style="left:270px;top:317px;width:146px;height:1px;background:#A6A6A6"></div>
<div class="t" style="left:270px;top:321.8px;color:#000">Change Status</div>
<div class="a" style="left:409px;top:322.5px;width:0;height:0;border-top:2.5px solid transparent;border-bottom:2.5px solid transparent;border-left:2.5px solid #000"></div>
<div class="t" style="left:270px;top:334.8px;color:#000">Change Category</div>
<div class="a" style="left:409px;top:335.5px;width:0;height:0;border-top:2.5px solid transparent;border-bottom:2.5px solid transparent;border-left:2.5px solid #000"></div>
<div class="a" style="left:251px;top:344px;width:165px;height:13px;background:#fff"></div>
<div class="t" style="left:255px;top:347.3px;color:#000">Set Due Date for selected tasks</div>
<div class="a" style="left:352px;top:344px;width:63px;height:13px;background:#fff;border:1px solid #E0DED8"></div>
<div class="t" style="left:355px;top:347.3px;color:#000">Bc 25.01.2009</div>
<div class="a" style="left:407px;top:345px;width:7px;height:11px;background:#D4D0C8"></div>
<div class="a" style="left:409px;top:350px;width:0;height:0;border-left:2px solid transparent;border-right:2px solid transparent;border-top:2px solid #000"></div>
<div class="a" style="left:251px;top:359px;width:165px;height:13px;background:#B8C0D6;border:1px solid #4E5E88"></div>
<div class="a" style="left:270px;top:357px;width:146px;height:1px;background:#A6A6A6"></div>
<div class="t" style="left:270px;top:362.3px;color:#000">Export</div>
<div class="a" style="left:409px;top:363.0px;width:0;height:0;border-top:2.5px solid transparent;border-bottom:2.5px solid transparent;border-left:2.5px solid #000"></div>
<div class="a" style="left:270px;top:373px;width:146px;height:1px;background:#A6A6A6"></div>
<div class="a" style="left:252px;top:375px;width:13px;height:12px;background:#D6DCEA;border:1px solid #5A6A92"></div>
<svg class="a" style="left:254px;top:377px" width="9" height="8" viewBox="0 0 9 8"><path d="M2.5 4 L4 5.5 L6.8 2.5" stroke="#000" stroke-width="1" fill="none"/></svg>
<div class="t" style="left:270px;top:377.8px;color:#000">Always Expand</div>
<div class="t" style="left:270px;top:391.3px;color:#A0A0A0">Expand All</div>
<div class="t" style="right:401px;top:391.3px;color:#A0A0A0">Ctrl+Alt+E</div>
<div class="t" style="left:270px;top:403.8px;color:#A0A0A0">Collapse All</div>
<div class="t" style="right:401px;top:403.8px;color:#A0A0A0">Ctrl+Alt+C</div>
<div class="a" style="left:416px;top:358px;width:99px;height:83px;background:#fff;border:1px solid #808080"></div>
<div class="a" style="left:417px;top:359px;width:15px;height:81px;background:#DBD8D1"></div>
<div class="a" style="left:515px;top:360px;width:2px;height:83px;background:rgba(0,0,0,0.10)"></div>
<div class="a" style="left:418px;top:441px;width:99px;height:2px;background:rgba(0,0,0,0.10)"></div>
<div class="t" style="left:436px;top:361.8px;">Export to VPXML...</div>
<div class="t" style="left:436px;top:374.7px;">Export to CSV</div>
<div class="a" style="left:436px;top:386px;width:78px;height:1px;background:#A6A6A6"></div>
<div class="a" style="left:417px;top:427px;width:97px;height:13px;background:#B8C0D6;border:1px solid #4E5E88"></div>
<div class="t" style="left:436px;top:390.7px;">Export View to Excel</div>
<div class="t" style="left:436px;top:403.5px;">Export View to HTML</div>
<div class="t" style="left:436px;top:416.3px;">Export View to Text</div>
<div class="t" style="left:436px;top:429px;">Export View to XML</div>
<svg class="a" style="left:419px;top:389px" width="11" height="11" viewBox="0 0 11 11"><rect x="0.5" y="0.5" width="6" height="8.5" fill="#F0F4FC" stroke="#B0C0E0" stroke-width="0.5"/><rect x="4" y="4.5" width="6.5" height="5.5" fill="#E4F4E4" stroke="#40A040" stroke-width="0.7"/><path d="M5.5 5.8 L9 8.8 M9 5.8 L5.5 8.8" stroke="#30A030" stroke-width="0.7"/></svg>
<svg class="a" style="left:419px;top:402px" width="11" height="11" viewBox="0 0 11 11"><rect x="0.5" y="0.5" width="6" height="8.5" fill="#F0F4FC" stroke="#B0C0E0" stroke-width="0.5"/><rect x="4" y="4.5" width="6.5" height="5.5" fill="#E8EEFA" stroke="#4068C0" stroke-width="0.7"/><path d="M5.5 7 L9 7" stroke="#4068C0" stroke-width="0.8"/></svg>
<svg class="a" style="left:419px;top:415px" width="11" height="11" viewBox="0 0 11 11"><rect x="0.5" y="0.5" width="6" height="8.5" fill="#F0F4FC" stroke="#B0C0E0" stroke-width="0.5"/><rect x="4" y="4.5" width="6.5" height="5.5" fill="#E4F4E4" stroke="#40A040" stroke-width="0.7"/><path d="M7.2 5.8 L7.2 8.8" stroke="#30A030" stroke-width="0.8"/></svg>
<svg class="a" style="left:419px;top:428px" width="11" height="11" viewBox="0 0 11 11"><rect x="0.5" y="0.5" width="6" height="8.5" fill="#F0F4FC" stroke="#B0C0E0" stroke-width="0.5"/><rect x="3" y="3.5" width="7" height="6.5" fill="#E86060" stroke="#B03030" stroke-width="0.6"/><path d="M4.5 5 L8.5 8.5 M8.5 5 L4.5 8.5" stroke="#fff" stroke-width="0.8"/></svg>
</body></html>
